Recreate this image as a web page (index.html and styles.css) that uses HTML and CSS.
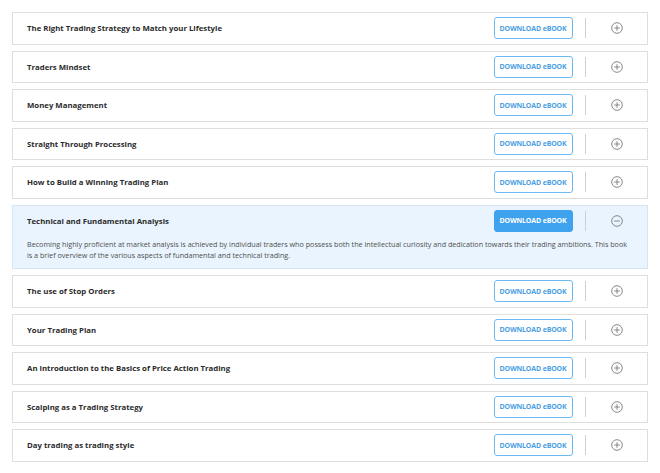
FILE: index.html
```html
<!DOCTYPE html>
<html>
<head>
<meta charset="utf-8">
<link rel="stylesheet" href="styles.css">
</head>
<body>
<div class="list">
  <div class="item"><div class="row"><div class="title">The Right Trading Strategy to Match your Lifestyle</div><a class="btn">DOWNLOAD eBOOK</a><span class="sep"></span><span class="toggle"><svg viewBox="0 0 12 12"><circle cx="6" cy="6" r="5.3"/><path d="M6 3.2v5.6M3.2 6h5.6"/></svg></span></div></div>
  <div class="item"><div class="row"><div class="title">Traders Mindset</div><a class="btn">DOWNLOAD eBOOK</a><span class="sep"></span><span class="toggle"><svg viewBox="0 0 12 12"><circle cx="6" cy="6" r="5.3"/><path d="M6 3.2v5.6M3.2 6h5.6"/></svg></span></div></div>
  <div class="item"><div class="row"><div class="title">Money Management</div><a class="btn">DOWNLOAD eBOOK</a><span class="sep"></span><span class="toggle"><svg viewBox="0 0 12 12"><circle cx="6" cy="6" r="5.3"/><path d="M6 3.2v5.6M3.2 6h5.6"/></svg></span></div></div>
  <div class="item"><div class="row"><div class="title">Straight Through Processing</div><a class="btn">DOWNLOAD eBOOK</a><span class="sep"></span><span class="toggle"><svg viewBox="0 0 12 12"><circle cx="6" cy="6" r="5.3"/><path d="M6 3.2v5.6M3.2 6h5.6"/></svg></span></div></div>
  <div class="item"><div class="row"><div class="title">How to Build a Winning Trading Plan</div><a class="btn">DOWNLOAD eBOOK</a><span class="sep"></span><span class="toggle"><svg viewBox="0 0 12 12"><circle cx="6" cy="6" r="5.3"/><path d="M6 3.2v5.6M3.2 6h5.6"/></svg></span></div></div>
  <div class="item open"><div class="row"><div class="title">Technical and Fundamental Analysis</div><a class="btn">DOWNLOAD eBOOK</a><span class="sep"></span><span class="toggle"><svg viewBox="0 0 12 12"><circle cx="6" cy="6" r="5.3"/><path d="M3.2 6h5.6"/></svg></span></div>
    <p class="desc">Becoming highly proficient at market analysis is achieved by individual traders who possess both the intellectual curiosity and dedication towards their trading ambitions. This book is a brief overview of the various aspects of fundamental and technical trading.</p></div>
  <div class="item"><div class="row"><div class="title">The use of Stop Orders</div><a class="btn">DOWNLOAD eBOOK</a><span class="sep"></span><span class="toggle"><svg viewBox="0 0 12 12"><circle cx="6" cy="6" r="5.3"/><path d="M6 3.2v5.6M3.2 6h5.6"/></svg></span></div></div>
  <div class="item"><div class="row"><div class="title">Your Trading Plan</div><a class="btn">DOWNLOAD eBOOK</a><span class="sep"></span><span class="toggle"><svg viewBox="0 0 12 12"><circle cx="6" cy="6" r="5.3"/><path d="M6 3.2v5.6M3.2 6h5.6"/></svg></span></div></div>
  <div class="item"><div class="row"><div class="title">An introduction to the Basics of Price Action Trading</div><a class="btn">DOWNLOAD eBOOK</a><span class="sep"></span><span class="toggle"><svg viewBox="0 0 12 12"><circle cx="6" cy="6" r="5.3"/><path d="M6 3.2v5.6M3.2 6h5.6"/></svg></span></div></div>
  <div class="item"><div class="row"><div class="title">Scalping as a Trading Strategy</div><a class="btn">DOWNLOAD eBOOK</a><span class="sep"></span><span class="toggle"><svg viewBox="0 0 12 12"><circle cx="6" cy="6" r="5.3"/><path d="M6 3.2v5.6M3.2 6h5.6"/></svg></span></div></div>
  <div class="item"><div class="row"><div class="title">Day trading as trading style</div><a class="btn">DOWNLOAD eBOOK</a><span class="sep"></span><span class="toggle"><svg viewBox="0 0 12 12"><circle cx="6" cy="6" r="5.3"/><path d="M6 3.2v5.6M3.2 6h5.6"/></svg></span></div></div>
</div>
</body>
</html>
```
FILE: styles.css
```css
html, body { margin: 0; padding: 0; background: #fff; }
body { padding: 12px; font-family: "Open Sans", "Liberation Sans", sans-serif; }
.list { display: flex; flex-direction: column; gap: 6px; }
.item { border: 1px solid #dedede; background: #fff; }
.item.open { background: #e9f4fe; border-color: #d6e5f2; }
.row { display: flex; align-items: center; height: 30.5px; padding-left: 14px; }
.title { flex: 1; font-size: 7.8px; font-weight: 700; color: #2b2b2b; }
.btn { box-sizing: border-box; width: 79px; height: 22px; border: 1.5px solid #6cbaf3; border-radius: 3px; display: flex; align-items: center; justify-content: center; font-size: 7px; font-weight: 700; color: #4c9fe3; letter-spacing: -0.15px; }
.open .btn { background: #3ea2ef; border-color: #3ea2ef; color: #fff; }
.sep { width: 1.5px; height: 20px; background: #cfcfcf; margin-left: 12px; }
.toggle { width: 61px; display: flex; justify-content: center; }
.toggle svg { width: 12px; height: 12px; fill: none; stroke: #7c7c7c; stroke-width: 0.9; }
.desc { margin: 3px 14px 7px; font-size: 7.2px; line-height: 11px; color: #4f4f4f; }
```
